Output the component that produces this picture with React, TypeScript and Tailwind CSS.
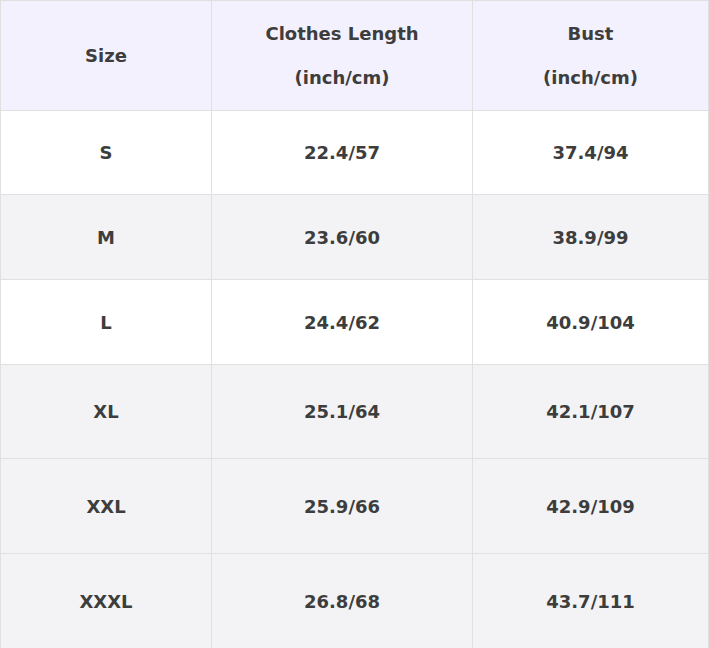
const rows = [
  { size: 'S', length: '22.4/57', bust: '37.4/94', shade: false, h: 'h-[84px]' },
  { size: 'M', length: '23.6/60', bust: '38.9/99', shade: true, h: 'h-[85px]' },
  { size: 'L', length: '24.4/62', bust: '40.9/104', shade: false, h: 'h-[85px]' },
  { size: 'XL', length: '25.1/64', bust: '42.1/107', shade: true, h: 'h-[94px]' },
  { size: 'XXL', length: '25.9/66', bust: '42.9/109', shade: true, h: 'h-[95px]' },
  { size: 'XXXL', length: '26.8/68', bust: '43.7/111', shade: true, h: 'h-[95px]' },
]

const cell = 'flex items-center justify-center text-center border-r border-b border-[#e0e0e0]'

export default function App() {
  return (
    <div className="w-[709px] h-[648px] overflow-hidden bg-white">
      <div
        className="border-l border-t border-[#e0e0e0] text-[18px] font-bold text-[#3d3d3d]"
        style={{ fontFamily: '"DejaVu Sans", Verdana, sans-serif' }}
      >
        {/* header */}
        <div className="grid grid-cols-[211px_261px_236px] h-[110px] bg-[#f4f1fe] leading-[44px]">
          <div className={cell}>Size</div>
          <div className={cell}>
            <div>
              Clothes Length
              <br />
              (inch/cm)
            </div>
          </div>
          <div className={cell}>
            <div>
              Bust
              <br />
              (inch/cm)
            </div>
          </div>
        </div>

        {rows.map((r) => (
          <div
            key={r.size}
            className={`grid grid-cols-[211px_261px_236px] ${r.h} ${r.shade ? 'bg-[#f3f3f5]' : 'bg-white'}`}
          >
            <div className={cell}>{r.size}</div>
            <div className={cell}>{r.length}</div>
            <div className={cell}>{r.bust}</div>
          </div>
        ))}
      </div>
    </div>
  )
}
